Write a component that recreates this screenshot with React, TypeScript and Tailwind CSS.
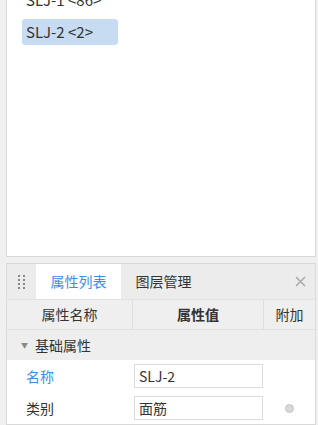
import React from 'react';

const font = { fontFamily: '"Noto Sans CJK SC", "Noto Sans", sans-serif' };

const App = () => {
  return (
    <div className="h-[425px] w-[318px] overflow-hidden bg-[#f0f0f0] flex flex-col pl-[6px] pr-[2px] text-[14px] text-[#333]" style={font}>
      {/* Component list */}
      <div className="flex-1 bg-white border-x border-b border-[#d9d9d9] overflow-hidden">
        <ul className="-mt-[13px] pl-[15px] flex flex-col gap-[6px]">
          <li className="h-[26px] w-[96px] pl-[4px] flex items-center text-[15px]">SLJ-1 &lt;86&gt;</li>
          <li className="h-[26px] w-[96px] pl-[4px] flex items-center text-[15px] bg-[#c7dcf3] rounded-[3px]">SLJ-2 &lt;2&gt;</li>
        </ul>
      </div>

      {/* Property panel */}
      <div className="mt-[6px] h-[162px] shrink-0 bg-white border border-[#d9d9d9] flex flex-col">
        <div className="h-[35px] bg-[#ececec] flex items-stretch">
          <div className="w-[29px] flex items-center justify-center">
            <div className="grid grid-cols-2 gap-x-[3px] gap-y-[2px]">
              {Array.from({ length: 8 }).map((_, i) => (
                <span key={i} className="w-[2px] h-[2px] bg-[#888]" />
              ))}
            </div>
          </div>
          <div className="w-[85px] bg-white flex items-center justify-center text-[#3d8ee9]">属性列表</div>
          <div className="w-[85px] flex items-center justify-center text-[#333]">图层管理</div>
          <div className="flex-1" />
          <div className="w-[30px] flex items-center justify-center">
            <svg width="11" height="11" viewBox="0 0 11 11" stroke="#aaa" strokeWidth="1.5">
              <path d="M1 1l9 9M10 1l-9 9" />
            </svg>
          </div>
        </div>
        <div className="h-[31px] flex bg-[#efefef] border-t border-[#e2e2e2] border-b border-[#dedede]">
          <div className="w-[126px] flex items-center justify-center border-r border-[#dedede]">属性名称</div>
          <div className="w-[131px] flex items-center justify-center border-r border-[#dedede] font-bold">属性值</div>
          <div className="flex-1 flex items-center justify-center">附加</div>
        </div>
        <div className="h-[30px] flex items-center bg-[#eeeeee] pl-[14px] gap-[7px]">
          <span className="text-[7px] text-[#888]">▼</span>
          <span>基础属性</span>
        </div>
        <div className="flex flex-col pt-[4px] gap-[8px]">
          <div className="flex items-center h-[24px]">
            <div className="w-[127px] pl-[19px] text-[#3d8ee9]">名称</div>
            <div className="w-[129px] h-[24px] border border-[#dcdcdc] flex items-center pl-[4px]">SLJ-2</div>
          </div>
          <div className="flex items-center h-[24px]">
            <div className="w-[127px] pl-[19px]">类别</div>
            <div className="w-[129px] h-[24px] border border-[#dcdcdc] flex items-center pl-[4px]">面筋</div>
            <div className="flex-1 flex justify-center">
              <span className="w-[9px] h-[9px] rounded-full bg-[#d8d8d8] border border-[#c4c4c4]" />
            </div>
          </div>
        </div>
      </div>
    </div>
  );
};

export default App;
